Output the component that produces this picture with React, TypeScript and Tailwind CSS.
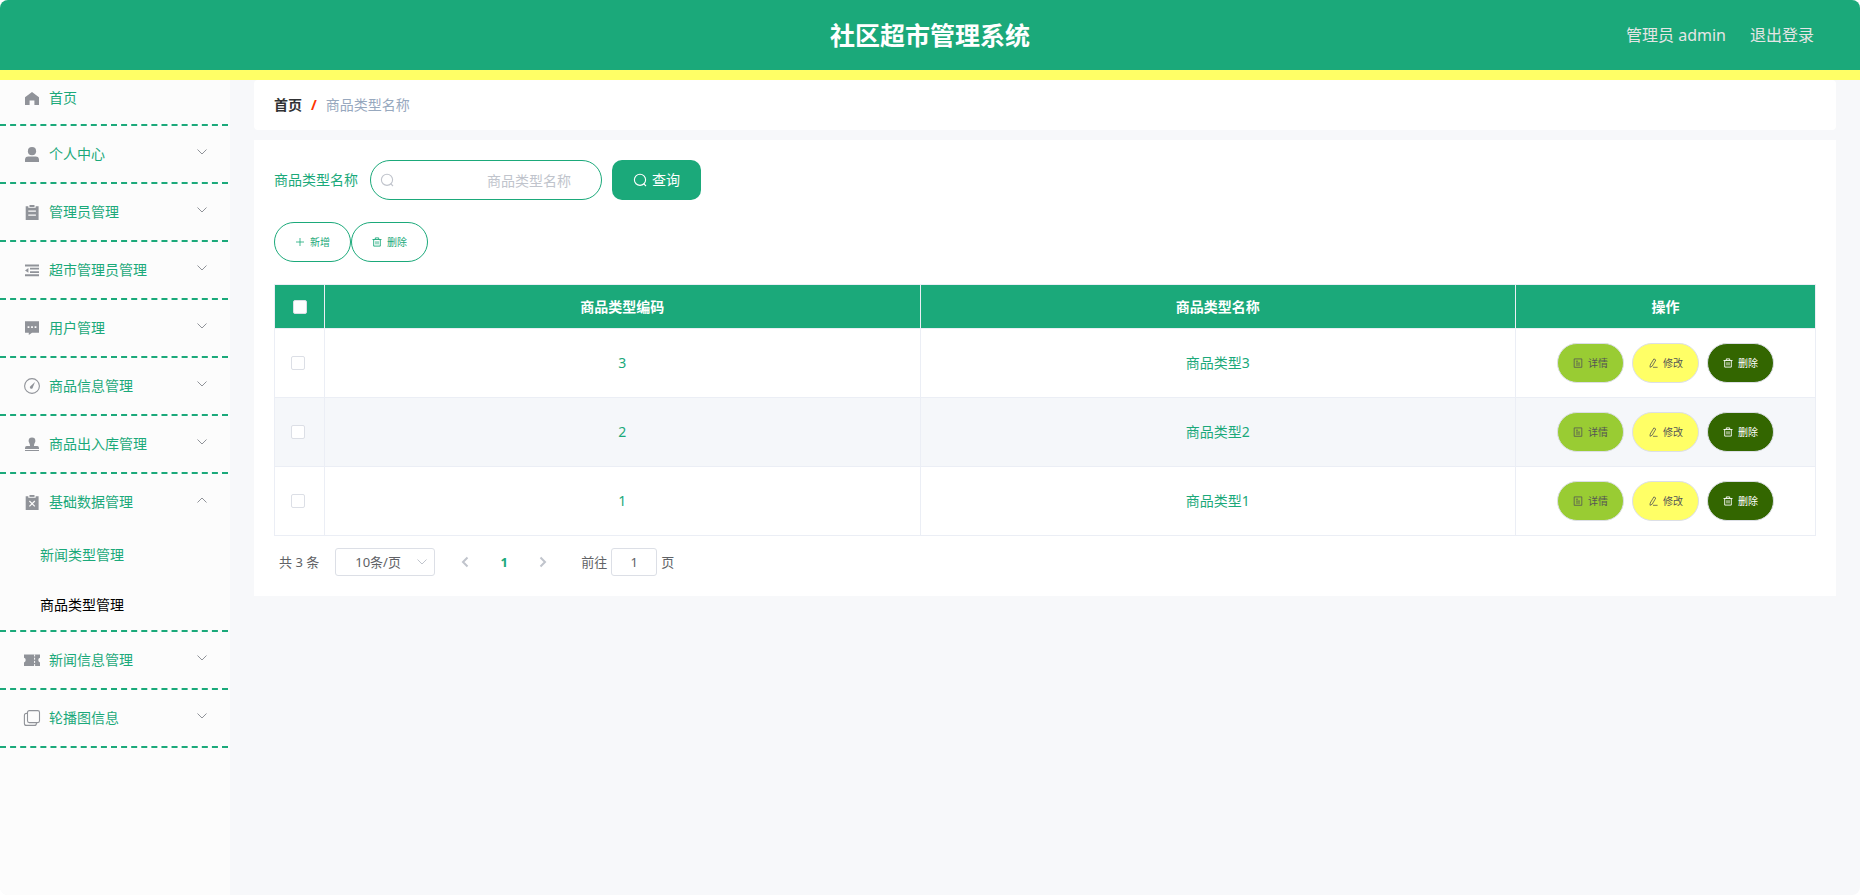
import { FC, ReactNode, SVGProps, useState } from "react";
import { clsx } from "clsx";

type IconProps = SVGProps<SVGSVGElement>;

const MenuSvg: FC<{ children: ReactNode }> = ({ children }) => (
  <svg viewBox="0 0 18 18" fill="currentColor" className="mx-[3px] size-[18px] shrink-0 text-[#909399]" aria-hidden="true">
    {children}
  </svg>
);

const icons = {
  home: <path d="M9 3 16 8.2V16h-4.6v-4.6H6.6V16H2V8.2z" />,
  user: (
    <>
      <circle cx="9" cy="6.2" r="4.1" />
      <path d="M2 17v-2.2a3.4 3.4 0 0 1 3.4-3.4h7.2a3.4 3.4 0 0 1 3.4 3.4V17z" />
    </>
  ),
  order: (
    <>
      <path d="M2.7 3.2h2.6v1.6h7.4V3.2h2.9V17H2.7z" />
      <path d="M6.5 2h5v1.9h-5z" />
      <path d="M5.3 8.1h7.6M5.3 12.2h7.6" stroke="#fcfcfc" strokeWidth="1.2" />
    </>
  ),
  fold: <path d="M2 3.4h14v2H2zM7 6.8h9v1.7H7zM7 10.2h9v1.7H7zM2 13.3h14v2H2zM2 9.4l3.4-2.3v4.6z" />,
  comment: (
    <>
      <path d="M2 2.3h14v11.5H9L5.8 16v-2.2H2z" />
      <path d="M4.6 7.3h1.8v1.6H4.6zM8.1 7.3h1.8v1.6H8.1zM11.6 7.3h1.8v1.6h-1.8z" fill="#fcfcfc" />
    </>
  ),
  compass: (
    <>
      <circle cx="9" cy="9" r="7.4" fill="none" stroke="currentColor" strokeWidth="1.1" />
      <path d="M12 5 9.9 10.2a1.5 1.5 0 0 1-2.5 1.2 1.5 1.5 0 0 1 .3-2.4z" />
    </>
  ),
  stamp: (
    <path d="M9 2.6A3.4 3.4 0 0 1 12.4 6c0 1.6-1.4 2.6-1.4 4.4v.7h3.2a1.8 1.8 0 0 1 1.8 1.8v1H2v-1a1.8 1.8 0 0 1 1.8-1.8H7v-.7C7 8.6 5.6 7.6 5.6 6A3.4 3.4 0 0 1 9 2.6zM2 15h14v1.1H2z" />
  ),
  release: (
    <>
      <path d="M2.7 3.2h2.6v1.6h7.4V3.2h2.9V17H2.7z" />
      <path d="M6.5 2h5v1.9h-5z" />
      <path d="m6.4 8 5.4 5.4M11.8 8l-5.4 5.4" stroke="#fcfcfc" strokeWidth="1.2" />
    </>
  ),
  ticket: (
    <>
      <path d="M1 3.5h16v3.3a2.4 2.4 0 0 0 0 4.6V15H1v-3.6a2.4 2.4 0 0 0 0-4.6z" />
      <path d="M11.6 3.5V15" stroke="#fcfcfc" strokeWidth="1" strokeDasharray="2 1.2" />
    </>
  ),
  copy: (
    <g fill="none" stroke="currentColor" strokeWidth="1.1">
      <rect x="4.5" y="1.6" width="12" height="12" rx="1.8" />
      <path d="M4.5 4.4H3.4a2 2 0 0 0-2 2v8a2 2 0 0 0 2 2h8a2 2 0 0 0 2-2v-.8" />
    </g>
  ),
};

const Chevron: FC<IconProps> = (props) => (
  <svg viewBox="0 0 12 12" fill="none" stroke="currentColor" strokeWidth="1" aria-hidden="true" {...props}>
    <path d="m1.5 3.5 4.5 4.5 4.5-4.5" />
  </svg>
);

const SearchIcon: FC<IconProps> = (props) => (
  <svg viewBox="0 0 14 14" fill="none" stroke="currentColor" strokeWidth="1.1" aria-hidden="true" {...props}>
    <circle cx="7" cy="6.8" r="5.6" />
    <path d="m10.6 10.6 2.4 2.4" />
  </svg>
);

const PlusIcon = () => (
  <svg viewBox="0 0 10 10" className="size-2.5" stroke="currentColor" strokeWidth="0.8" aria-hidden="true">
    <path d="M5 1v8M1 5h8" />
  </svg>
);

const TrashIcon = () => (
  <svg viewBox="0 0 10 10" className="size-2.5" fill="none" stroke="currentColor" strokeWidth="0.9" aria-hidden="true">
    <path d="M.5 2.5h9M3.3 2.3V.9h3.4v1.4M1.7 2.5v6.6h6.6V2.5M4 4.2v3.2M6 4.2v3.2" />
  </svg>
);

const DetailIcon = () => (
  <svg viewBox="0 0 10 10" className="size-2.5" fill="none" stroke="currentColor" strokeWidth="0.8" aria-hidden="true">
    <path d="M1.2.9h7.6v8.4H1.2zM3 3.2h2M3 5.1h4M3 7h4" />
  </svg>
);

const EditIcon = () => (
  <svg viewBox="0 0 10 10" className="size-2.5" fill="none" stroke="currentColor" strokeWidth="0.8" aria-hidden="true">
    <path d="M5.9.9 7.8 2 4.2 8.2 2 9.3l.2-2.3zM5 9.3h4.6" />
  </svg>
);

interface MenuItem {
  name: string;
  icon: keyof typeof icons;
  children?: string[];
}

const menus: MenuItem[] = [
  { name: "个人中心", icon: "user" },
  { name: "管理员管理", icon: "order" },
  { name: "超市管理员管理", icon: "fold" },
  { name: "用户管理", icon: "comment" },
  { name: "商品信息管理", icon: "compass" },
  { name: "商品出入库管理", icon: "stamp" },
  { name: "基础数据管理", icon: "release", children: ["新闻类型管理", "商品类型管理"] },
  { name: "新闻信息管理", icon: "ticket" },
  { name: "轮播图信息", icon: "copy" },
];

const rows = [
  { code: "3", name: "商品类型3" },
  { code: "2", name: "商品类型2" },
  { code: "1", name: "商品类型1" },
];

const Header = () => (
  <header className="grid h-20 shrink-0 grid-cols-[1fr_auto_1fr] items-center border-b-10 border-[#ffff66] bg-[#1ba97a] px-[46px]">
    <h1 className="col-start-2 text-[25px] font-bold text-white">社区超市管理系统</h1>
    <div className="flex justify-end gap-6 text-base text-[#e5e5e5]">
      <span>管理员 admin</span>
      <a href="#logout">退出登录</a>
    </div>
  </header>
);

const Sidebar: FC = () => {
  const [active, setActive] = useState("商品类型管理");

  return (
    <nav className="w-[230px] shrink-0 bg-[#fcfcfc] pr-0.5 text-sm text-[#1ba97a]">
      <ul>
        <li className="border-b-2 border-dashed">
          <a href="#home" className="flex h-11 items-center gap-[5px] px-5 pb-2">
            <MenuSvg>{icons.home}</MenuSvg>
            首页
          </a>
        </li>
        {menus.map((item) => (
          <li key={item.name} className="border-b-2 border-dashed">
            <button type="button" className="flex h-14 w-full cursor-pointer items-center gap-[5px] px-5 text-left">
              <MenuSvg>{icons[item.icon]}</MenuSvg>
              <span className="grow">{item.name}</span>
              <Chevron className={clsx("mb-1 size-3 text-[#909399]", item.children && "rotate-180")} />
            </button>
            {item.children?.map((child) => (
              <a
                key={child}
                href={`#${child}`}
                onClick={() => setActive(child)}
                className={clsx("flex h-[50px] items-center pl-10", active === child && "text-black")}
              >
                {child}
              </a>
            ))}
          </li>
        ))}
      </ul>
    </nav>
  );
};

const outlineButton =
  "flex h-10 cursor-pointer items-center gap-[5px] rounded-full border border-[#1ba97a] px-5 text-[10px] text-[#1ba97a]";
const rowButton =
  "flex h-10 cursor-pointer items-center gap-[5px] rounded-full border border-[#dcdfe6] px-[15px] text-[10px]";
const checkbox =
  "block size-3.5 appearance-none rounded-xs border border-[#dcdfe6] bg-white checked:bg-[#1ba97a]";
const cell = "border-r border-b border-[#ebeef5]";

const TypeTable = () => (
  <table className="mt-[22px] w-full table-fixed border-separate border-spacing-0 border-t border-l border-[#ebeef5] text-center text-sm text-[#1ba97a]">
    <colgroup>
      <col className="w-[50px]" />
      <col />
      <col />
      <col className="w-[300px]" />
    </colgroup>
    <thead>
      <tr className="h-11 bg-[#1ba97a] text-white">
        <th className={clsx(cell, "pl-[18px]")}>
          <input type="checkbox" aria-label="全选" className={checkbox} />
        </th>
        <th className={cell}>商品类型编码</th>
        <th className={cell}>商品类型名称</th>
        <th className={cell}>操作</th>
      </tr>
    </thead>
    <tbody>
      {rows.map((row) => (
        <tr key={row.code} className="h-[69px] even:bg-[#f5f7fa]">
          <td className={clsx(cell, "pl-4")}>
            <input type="checkbox" aria-label={row.name} className={checkbox} />
          </td>
          <td className={cell}>{row.code}</td>
          <td className={cell}>{row.name}</td>
          <td className={cell}>
            <div className="flex justify-center gap-2">
              <button type="button" className={clsx(rowButton, "bg-[#99cc33] text-[#555555]")}>
                <DetailIcon />
                详情
              </button>
              <button type="button" className={clsx(rowButton, "bg-[#ffff66] text-[#555555]")}>
                <EditIcon />
                修改
              </button>
              <button type="button" className={clsx(rowButton, "bg-[#336600] text-white")}>
                <TrashIcon />
                删除
              </button>
            </div>
          </td>
        </tr>
      ))}
    </tbody>
  </table>
);

const Pagination = () => (
  <div className="mt-3 flex items-center pl-[5px] text-[13px] text-[#606266]">
    <span>共 3 条</span>
    <div className="relative ml-4">
      <select
        aria-label="每页条数"
        className="block h-7 w-[100px] appearance-none rounded-[3px] border border-[#dcdfe6] bg-white pl-[19px]"
      >
        <option>10条/页</option>
      </select>
      <Chevron className="pointer-events-none absolute top-2 right-[7px] size-3 text-[#c0c4cc]" />
    </div>
    <button type="button" aria-label="上一页" className="ml-6 text-[#c0c4cc]">
      <Chevron className="size-3 rotate-90 stroke-2" />
    </button>
    <button type="button" className="mx-7 w-2.5 font-bold text-[#1ba97a]">
      1
    </button>
    <button type="button" aria-label="下一页" className="text-[#c0c4cc]">
      <Chevron className="size-3 -rotate-90 stroke-2" />
    </button>
    <label className="ml-8 flex items-center gap-1">
      前往
      <input
        defaultValue="1"
        className="h-7 w-[46px] rounded-[3px] border border-[#dcdfe6] bg-white text-center"
      />
      页
    </label>
  </div>
);

export default function App() {
  return (
    <div className="flex min-h-screen flex-col overflow-hidden rounded-lg bg-[#f7f8fa] font-['Noto_Sans','Noto_Sans_CJK_SC',sans-serif] leading-5">
      <Header />
      <div className="flex grow">
        <Sidebar />
        <main className="min-w-0 grow px-6">
          <nav aria-label="breadcrumb" className="flex h-[50px] items-center rounded bg-white px-5 text-sm">
            <a href="#home" className="font-bold text-[#303133]">
              首页
            </a>
            <span className="mx-[9px] font-bold text-[#ff3300]">/</span>
            <span className="text-[#97a8be]">商品类型名称</span>
          </nav>

          <section className="mt-2.5 bg-white p-5">
            <form className="flex items-center gap-2.5 text-sm text-[#1ba97a]" onSubmit={(e) => e.preventDefault()}>
              <label htmlFor="typeName" className="mr-0.5">
                商品类型名称
              </label>
              <div className="relative">
                <input
                  id="typeName"
                  placeholder="商品类型名称"
                  className="block h-10 w-[232px] rounded-full border border-[#1ba97a] pr-[30px] pl-8 text-right placeholder:text-[#c0c4cc]"
                />
                <SearchIcon className="pointer-events-none absolute top-[13px] left-2.5 size-3.5 text-[#c0c4cc]" />
              </div>
              <button
                type="submit"
                className="flex h-10 cursor-pointer items-center gap-[5px] rounded-[10px] bg-[#1ba97a] px-[21px] text-white"
              >
                <SearchIcon className="size-3.5" />
                查询
              </button>
            </form>

            <div className="mt-[22px] flex">
              <button type="button" className={outlineButton}>
                <PlusIcon />
                新增
              </button>
              <button type="button" className={outlineButton}>
                <TrashIcon />
                删除
              </button>
            </div>

            <TypeTable />
            <Pagination />
          </section>
        </main>
      </div>
    </div>
  );
}
